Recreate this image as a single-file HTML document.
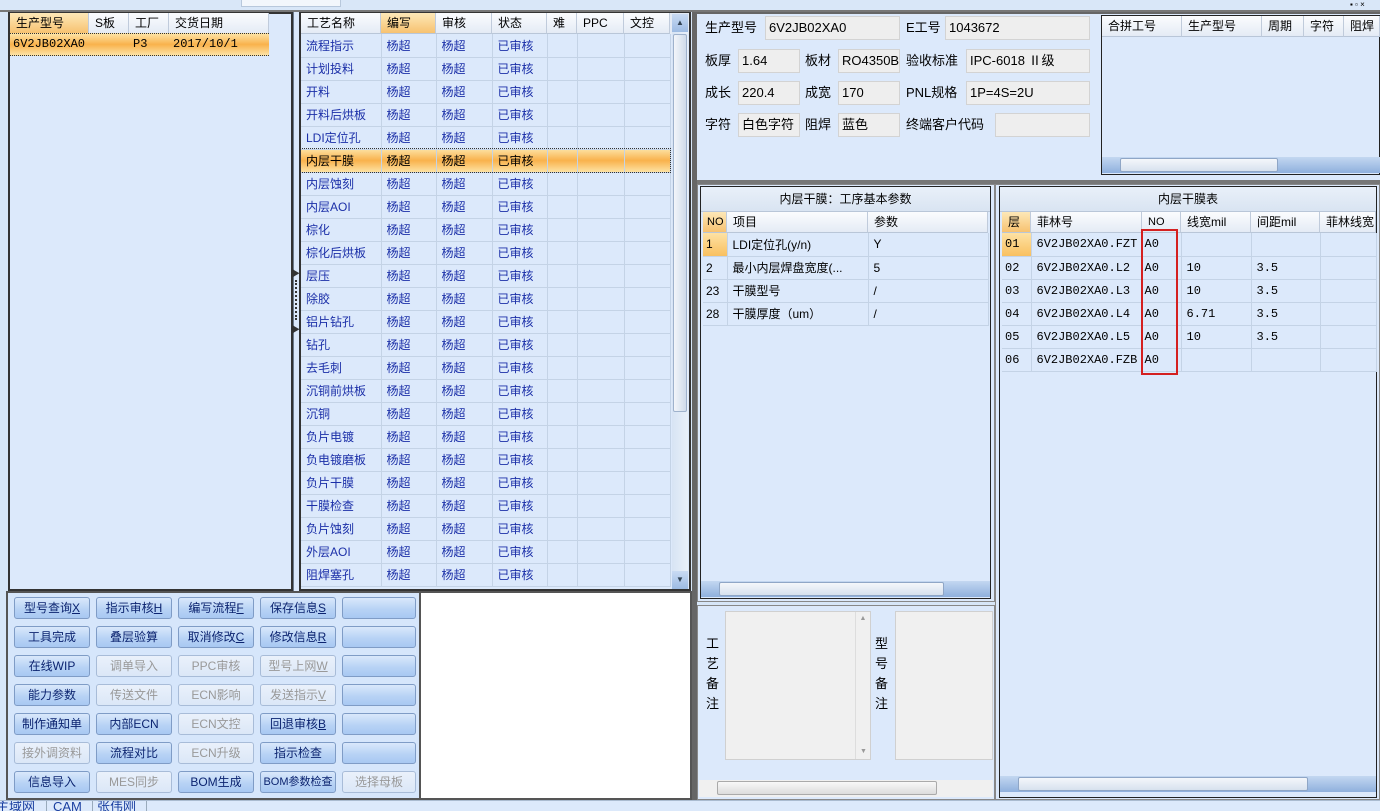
<!DOCTYPE html>
<html><head><meta charset="utf-8">
<style>
*{box-sizing:border-box;margin:0;padding:0}
body{width:1380px;height:811px;overflow:hidden;background:#d7e6f8;font-family:"Liberation Sans","Noto Sans CJK SC",sans-serif;font-size:12px;position:relative;color:#000}
.a{position:absolute}
.panel{position:absolute;background:#dce9fb;border:1px solid #222}
.hd{position:absolute;height:21px;line-height:20px;padding-left:6px;background:linear-gradient(#fbfcfe,#e4ebf5);border-right:1px solid #c0cbdb;border-bottom:1px solid #b9c6d8;font-size:12px;white-space:nowrap;overflow:hidden}
.hdo{background:linear-gradient(#fde8b8,#f7c270)}
.sel{background:linear-gradient(#fde2a4,#f9b24c 50%,#fde2a4);border-top:1px dotted #333;border-bottom:1px dotted #333}
table{border-collapse:collapse;table-layout:fixed}
td{border-right:1px solid #c4d3e6;border-bottom:1px solid #c4d3e6;height:23px;padding-left:5px;white-space:nowrap;overflow:hidden;font-size:12px}
.mid td{color:#1b2fa8}
.btn{position:absolute;width:76px;height:22px;border:1px solid #7f9cc6;border-radius:3px;background:linear-gradient(#d9e8fb,#b8d3f5 55%,#a8c8f2);color:#0c2470;text-align:center;line-height:20px;font-size:12px;white-space:nowrap}
.dis{background:linear-gradient(#eaf1fb,#dbe7f7);color:#999;border-color:#a8bcd8}
.lbl{position:absolute;font-size:13px;line-height:24px}
.box{position:absolute;height:24px;background:#eeeeee;border:1px solid #d3d3d3;font-size:13px;line-height:22px;padding-left:3px;white-space:nowrap;overflow:hidden}
.hs{position:absolute;height:16px;background:linear-gradient(#c3d7f1,#8fb0dd);}
.thumb{position:absolute;top:1px;height:14px;background:linear-gradient(#f4f7fb,#d7e1ee);border:1px solid #8fa6c6;border-radius:2px}
</style></head><body>
<!-- top bar -->
<div class="a" style="left:0;top:0;width:1380px;height:10px;background:#d9e7f8"></div>
<div class="a" style="left:241px;top:0;width:100px;height:7px;background:#f3f7fc;border:1px solid #b8c8dc;border-top:0"></div>
<div class="a" style="left:1350px;top:0;width:30px;height:5px;font-size:8px">▪ ▫ ×</div>
<div class="a" style="left:0;top:10px;width:1380px;height:2px;background:#777"></div>

<!-- left panel -->
<div class="panel" style="left:8px;top:12px;width:285px;height:579px;border:2px solid #333;"></div>
<div class="hd hdo" style="left:10px;top:13px;width:79px">生产型号</div>
<div class="hd" style="left:89px;top:13px;width:40px">S板</div>
<div class="hd" style="left:129px;top:13px;width:40px">工厂</div>
<div class="hd" style="left:169px;top:13px;width:100px">交货日期</div>
<div class="a sel" style="left:10px;top:33px;width:259px;height:23px;line-height:21px;font-family:'Liberation Mono','Noto Sans CJK SC',monospace;font-size:12px">
<span class="a" style="left:3px">6V2JB02XA0</span><span class="a" style="left:123px">P3</span><span class="a" style="left:163px">2017/10/1</span></div>

<!-- splitter -->
<div class="a" style="left:293px;top:12px;width:7px;height:579px;background:#dce9fb;border-left:1px solid #6d7b8d"></div>
<div class="a" style="left:292px;top:268px;font-size:8px;color:#333">▶</div>
<div class="a" style="left:295px;top:280px;width:2px;height:40px;border-left:2px dotted #333"></div>
<div class="a" style="left:292px;top:324px;font-size:8px;color:#333">▶</div>

<!-- middle grid -->
<div class="panel" style="left:299px;top:12px;width:392px;height:579px;border:2px solid #333"></div>
<div class="hd" style="left:301px;top:13px;width:80px">工艺名称</div>
<div class="hd hdo" style="left:381px;top:13px;width:55px">编写</div>
<div class="hd" style="left:436px;top:13px;width:56px">审核</div>
<div class="hd" style="left:492px;top:13px;width:55px">状态</div>
<div class="hd" style="left:547px;top:13px;width:30px">难</div>
<div class="hd" style="left:577px;top:13px;width:47px">PPC</div>
<div class="hd" style="left:624px;top:13px;width:46px">文控</div>
<div class="a" style="left:670px;top:13px;width:19px;height:21px;background:#e4ebf5"></div>
<div class="a" style="left:672px;top:14px;width:16px;height:575px;background:linear-gradient(90deg,#d7e4f4,#e9f0f9)"></div>
<div class="a" style="left:672px;top:14px;width:16px;height:18px;background:linear-gradient(#c9dbf3,#9dbbe3);font-size:8px;text-align:center;line-height:18px;color:#345">▲</div>
<div class="a" style="left:673px;top:34px;width:14px;height:378px;background:linear-gradient(90deg,#f3f6fa,#cfdbea);border:1px solid #9fb2cc;border-radius:2px"></div>
<div class="a" style="left:672px;top:571px;width:16px;height:18px;background:linear-gradient(#c9dbf3,#9dbbe3);font-size:8px;text-align:center;line-height:18px;color:#345">▼</div>
<table class="a mid" style="left:301px;top:34px;width:369px">
<colgroup><col style="width:80px"><col style="width:55px"><col style="width:56px"><col style="width:55px"><col style="width:30px"><col style="width:47px"><col style="width:46px"></colgroup>
<tr><td>流程指示</td><td>杨超</td><td>杨超</td><td>已审核</td><td></td><td></td><td></td></tr>
<tr><td>计划投料</td><td>杨超</td><td>杨超</td><td>已审核</td><td></td><td></td><td></td></tr>
<tr><td>开料</td><td>杨超</td><td>杨超</td><td>已审核</td><td></td><td></td><td></td></tr>
<tr><td>开料后烘板</td><td>杨超</td><td>杨超</td><td>已审核</td><td></td><td></td><td></td></tr>
<tr><td>LDI定位孔</td><td>杨超</td><td>杨超</td><td>已审核</td><td></td><td></td><td></td></tr>
<tr style="background:linear-gradient(#fde2a4,#f9b24c 50%,#fde2a4);outline:1px dotted #333"><td style="color:#000">内层干膜</td><td style="color:#000">杨超</td><td style="color:#000">杨超</td><td style="color:#000">已审核</td><td></td><td></td><td></td></tr>
<tr><td>内层蚀刻</td><td>杨超</td><td>杨超</td><td>已审核</td><td></td><td></td><td></td></tr>
<tr><td>内层AOI</td><td>杨超</td><td>杨超</td><td>已审核</td><td></td><td></td><td></td></tr>
<tr><td>棕化</td><td>杨超</td><td>杨超</td><td>已审核</td><td></td><td></td><td></td></tr>
<tr><td>棕化后烘板</td><td>杨超</td><td>杨超</td><td>已审核</td><td></td><td></td><td></td></tr>
<tr><td>层压</td><td>杨超</td><td>杨超</td><td>已审核</td><td></td><td></td><td></td></tr>
<tr><td>除胶</td><td>杨超</td><td>杨超</td><td>已审核</td><td></td><td></td><td></td></tr>
<tr><td>铝片钻孔</td><td>杨超</td><td>杨超</td><td>已审核</td><td></td><td></td><td></td></tr>
<tr><td>钻孔</td><td>杨超</td><td>杨超</td><td>已审核</td><td></td><td></td><td></td></tr>
<tr><td>去毛刺</td><td>杨超</td><td>杨超</td><td>已审核</td><td></td><td></td><td></td></tr>
<tr><td>沉铜前烘板</td><td>杨超</td><td>杨超</td><td>已审核</td><td></td><td></td><td></td></tr>
<tr><td>沉铜</td><td>杨超</td><td>杨超</td><td>已审核</td><td></td><td></td><td></td></tr>
<tr><td>负片电镀</td><td>杨超</td><td>杨超</td><td>已审核</td><td></td><td></td><td></td></tr>
<tr><td>负电镀磨板</td><td>杨超</td><td>杨超</td><td>已审核</td><td></td><td></td><td></td></tr>
<tr><td>负片干膜</td><td>杨超</td><td>杨超</td><td>已审核</td><td></td><td></td><td></td></tr>
<tr><td>干膜检查</td><td>杨超</td><td>杨超</td><td>已审核</td><td></td><td></td><td></td></tr>
<tr><td>负片蚀刻</td><td>杨超</td><td>杨超</td><td>已审核</td><td></td><td></td><td></td></tr>
<tr><td>外层AOI</td><td>杨超</td><td>杨超</td><td>已审核</td><td></td><td></td><td></td></tr>
<tr><td>阻焊塞孔</td><td>杨超</td><td>杨超</td><td>已审核</td><td></td><td></td><td></td></tr>
</table>

<!-- buttons -->
<div class="a" style="left:6px;top:591px;width:686px;height:209px;background:#555"></div>
<div class="a" style="left:8px;top:593px;width:411px;height:205px;background:#d6e6fb"></div>
<div class="a" style="left:421px;top:593px;width:269px;height:205px;background:#fff"></div>
<div class="btn" style="left:14px;top:597px">型号查询<u>X</u></div>
<div class="btn" style="left:96px;top:597px">指示审核<u>H</u></div>
<div class="btn" style="left:178px;top:597px">编写流程<u>F</u></div>
<div class="btn" style="left:260px;top:597px">保存信息<u>S</u></div>
<div class="btn" style="left:342px;top:597px;width:74px"></div>
<div class="btn" style="left:14px;top:626px">工具完成</div>
<div class="btn" style="left:96px;top:626px">叠层验算</div>
<div class="btn" style="left:178px;top:626px">取消修改<u>C</u></div>
<div class="btn" style="left:260px;top:626px">修改信息<u>R</u></div>
<div class="btn" style="left:342px;top:626px;width:74px"></div>
<div class="btn" style="left:14px;top:655px">在线WIP</div>
<div class="btn dis" style="left:96px;top:655px">调单导入</div>
<div class="btn dis" style="left:178px;top:655px">PPC审核</div>
<div class="btn dis" style="left:260px;top:655px">型号上网<u>W</u></div>
<div class="btn" style="left:342px;top:655px;width:74px"></div>
<div class="btn" style="left:14px;top:684px">能力参数</div>
<div class="btn dis" style="left:96px;top:684px">传送文件</div>
<div class="btn dis" style="left:178px;top:684px">ECN影响</div>
<div class="btn dis" style="left:260px;top:684px">发送指示<u>V</u></div>
<div class="btn" style="left:342px;top:684px;width:74px"></div>
<div class="btn" style="left:14px;top:713px">制作通知单</div>
<div class="btn" style="left:96px;top:713px">内部ECN</div>
<div class="btn dis" style="left:178px;top:713px">ECN文控</div>
<div class="btn" style="left:260px;top:713px">回退审核<u>B</u></div>
<div class="btn" style="left:342px;top:713px;width:74px"></div>
<div class="btn dis" style="left:14px;top:742px">接外调资料</div>
<div class="btn" style="left:96px;top:742px">流程对比</div>
<div class="btn dis" style="left:178px;top:742px">ECN升级</div>
<div class="btn" style="left:260px;top:742px">指示检查</div>
<div class="btn" style="left:342px;top:742px;width:74px"></div>
<div class="btn" style="left:14px;top:771px">信息导入</div>
<div class="btn dis" style="left:96px;top:771px">MES同步</div>
<div class="btn" style="left:178px;top:771px">BOM生成</div>
<div class="btn" style="left:260px;top:771px;font-size:11px">BOM参数检查</div>
<div class="btn dis" style="left:342px;top:771px;width:74px">选择母板</div>

<!-- bottom tabs -->
<div class="a" style="left:0;top:800px;width:1380px;height:11px;background:#dce9fb;border-top:1px solid #aabbd0"></div>
<div class="a" style="left:0;top:801px;height:10px;font-size:13px;line-height:20px;color:#1a3fa0;overflow:hidden;white-space:nowrap;width:300px">
<span style="position:absolute;left:-4px;top:-4px">主域网</span>
<span style="position:absolute;left:46px;top:-4px;border-left:1px solid #9ab;padding-left:6px">CAM</span>
<span style="position:absolute;left:92px;top:-4px;border-left:1px solid #9ab;padding-left:4px">张伟刚</span>
<span style="position:absolute;left:146px;top:-4px;border-left:1px solid #9ab;height:20px"></span></div>

<!-- right side -->
<div class="a" style="left:692px;top:12px;width:5px;height:788px;background:#666"></div>
<div class="a" style="left:697px;top:12px;width:683px;height:170px;background:#dce9fb;border-top:2px solid #666"></div>
<div class="a" style="left:697px;top:180px;width:683px;height:4px;background:#777"></div>
<div class="lbl" style="left:705px;top:16px">生产型号</div><div class="box" style="left:765px;top:16px;width:135px">6V2JB02XA0</div>
<div class="lbl" style="left:906px;top:16px">E工号</div><div class="box" style="left:945px;top:16px;width:145px">1043672</div>
<div class="lbl" style="left:705px;top:49px">板厚</div><div class="box" style="left:738px;top:49px;width:62px">1.64</div>
<div class="lbl" style="left:805px;top:49px">板材</div><div class="box" style="left:838px;top:49px;width:62px">RO4350B</div>
<div class="lbl" style="left:906px;top:49px">验收标准</div><div class="box" style="left:966px;top:49px;width:124px">IPC-6018 Ⅱ级</div>
<div class="lbl" style="left:705px;top:81px">成长</div><div class="box" style="left:738px;top:81px;width:62px">220.4</div>
<div class="lbl" style="left:805px;top:81px">成宽</div><div class="box" style="left:838px;top:81px;width:62px">170</div>
<div class="lbl" style="left:906px;top:81px">PNL规格</div><div class="box" style="left:966px;top:81px;width:124px">1P=4S=2U</div>
<div class="lbl" style="left:705px;top:113px">字符</div><div class="box" style="left:738px;top:113px;width:62px">白色字符</div>
<div class="lbl" style="left:805px;top:113px">阻焊</div><div class="box" style="left:838px;top:113px;width:62px">蓝色</div>
<div class="lbl" style="left:906px;top:113px">终端客户代码</div><div class="box" style="left:995px;top:113px;width:95px"></div>

<div class="panel" style="left:1101px;top:15px;width:279px;height:160px"></div>
<div class="hd" style="left:1102px;top:16px;width:80px">合拼工号</div>
<div class="hd" style="left:1182px;top:16px;width:80px">生产型号</div>
<div class="hd" style="left:1262px;top:16px;width:42px">周期</div>
<div class="hd" style="left:1304px;top:16px;width:40px">字符</div>
<div class="hd" style="left:1344px;top:16px;width:36px">阻焊</div>
<div class="hs" style="left:1102px;top:157px;width:278px"><div class="thumb" style="left:18px;width:158px"></div></div>

<!-- lower left table -->
<div class="a" style="left:697px;top:184px;width:298px;height:418px;background:#dce9fb;border:1px solid #888"></div>
<div class="panel" style="left:700px;top:186px;width:291px;height:413px"></div>
<div class="a" style="left:701px;top:187px;width:289px;height:25px;line-height:25px;text-align:center;background:linear-gradient(#e9f0f9,#d9e4f2);border-bottom:1px solid #b9c6d8">内层干膜：工序基本参数</div>
<div class="hd hdo" style="left:703px;top:212px;width:24px;padding-left:4px;font-size:11px">NO</div>
<div class="hd" style="left:727px;top:212px;width:141px">项目</div>
<div class="hd" style="left:868px;top:212px;width:120px">参数</div>
<table class="a" style="left:703px;top:233px;width:285px">
<colgroup><col style="width:24px"><col style="width:141px"><col style="width:120px"></colgroup>
<tr><td style="background:linear-gradient(#fde2a4,#f9c060);padding-left:3px">1</td><td>LDI定位孔(y/n)</td><td>Y</td></tr>
<tr><td style="padding-left:3px">2</td><td>最小内层焊盘宽度(...</td><td>5</td></tr>
<tr><td style="padding-left:3px">23</td><td>干膜型号</td><td>/</td></tr>
<tr><td style="padding-left:3px">28</td><td>干膜厚度（um）</td><td>/</td></tr>
</table>
<div class="hs" style="left:701px;top:581px;width:289px"><div class="thumb" style="left:18px;width:225px"></div></div>

<!-- notes -->
<div class="a" style="left:697px;top:605px;width:298px;height:195px;background:#dce9fb;border:1px solid #888"></div>
<div class="a" style="left:706px;top:634px;width:14px;font-size:13px;line-height:20px">工<br>艺<br>备<br>注</div>
<div class="a" style="left:725px;top:611px;width:146px;height:149px;background:#f0f0f0;border:1px solid #d0d0d0"></div>
<div class="a" style="left:855px;top:612px;width:15px;height:147px;border-left:1px solid #ddd;font-size:7px;color:#999;text-align:center;line-height:14px">▲<div style="position:absolute;bottom:0;width:15px">▼</div></div>
<div class="a" style="left:875px;top:634px;width:14px;font-size:13px;line-height:20px">型<br>号<br>备<br>注</div>
<div class="a" style="left:895px;top:611px;width:98px;height:149px;background:#f0f0f0;border:1px solid #d0d0d0"></div>
<div class="a" style="left:699px;top:780px;width:294px;height:17px;background:#f0f0f0"><div class="thumb" style="left:18px;width:220px;background:linear-gradient(#f8f8f8,#dcdcdc);border-color:#aaa"></div></div>

<!-- right table -->
<div class="a" style="left:995px;top:184px;width:385px;height:616px;background:#dce9fb;border:1px solid #888"></div>
<div class="panel" style="left:999px;top:186px;width:378px;height:612px"></div>
<div class="a" style="left:1000px;top:187px;width:376px;height:25px;line-height:25px;text-align:center;background:linear-gradient(#e9f0f9,#d9e4f2);border-bottom:1px solid #b9c6d8">内层干膜表</div>
<div class="hd hdo" style="left:1002px;top:212px;width:29px">层</div>
<div class="hd" style="left:1031px;top:212px;width:111px">菲林号</div>
<div class="hd" style="left:1142px;top:212px;width:39px;font-size:11px">NO</div>
<div class="hd" style="left:1181px;top:212px;width:70px">线宽mil</div>
<div class="hd" style="left:1251px;top:212px;width:69px">间距mil</div>
<div class="hd" style="left:1320px;top:212px;width:56px">菲林线宽</div>
<table class="a" style="left:1002px;top:233px;width:374px;font-family:'Liberation Mono','Noto Sans CJK SC',monospace">
<colgroup><col style="width:29px"><col style="width:111px"><col style="width:39px"><col style="width:70px"><col style="width:69px"><col style="width:56px"></colgroup>
<tr><td style="background:linear-gradient(#fde2a4,#f9c060);padding-left:3px">01</td><td>6V2JB02XA0.FZT</td><td style="padding-left:2px">A0</td><td></td><td></td><td></td></tr>
<tr><td style="padding-left:3px">02</td><td>6V2JB02XA0.L2</td><td style="padding-left:2px">A0</td><td>10</td><td>3.5</td><td></td></tr>
<tr><td style="padding-left:3px">03</td><td>6V2JB02XA0.L3</td><td style="padding-left:2px">A0</td><td>10</td><td>3.5</td><td></td></tr>
<tr><td style="padding-left:3px">04</td><td>6V2JB02XA0.L4</td><td style="padding-left:2px">A0</td><td>6.71</td><td>3.5</td><td></td></tr>
<tr><td style="padding-left:3px">05</td><td>6V2JB02XA0.L5</td><td style="padding-left:2px">A0</td><td>10</td><td>3.5</td><td></td></tr>
<tr><td style="padding-left:3px">06</td><td>6V2JB02XA0.FZB</td><td style="padding-left:2px">A0</td><td></td><td></td><td></td></tr>
</table>
<div class="a" style="left:1141px;top:229px;width:37px;height:146px;border:2px solid #d42020"></div>
<div class="hs" style="left:1000px;top:776px;width:376px"><div class="thumb" style="left:18px;width:290px"></div></div>
</body></html>
